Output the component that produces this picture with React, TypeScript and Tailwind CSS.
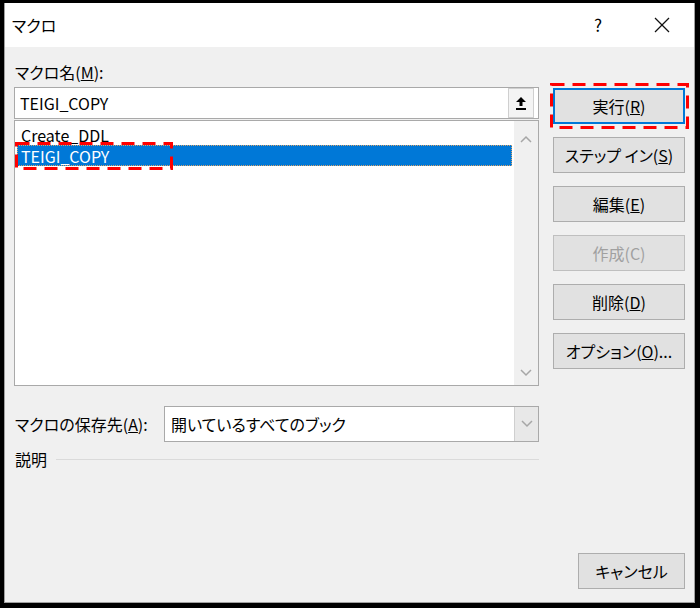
const FONT = "font-['Noto_Sans_CJK_JP',sans-serif] [font-feature-settings:'palt']";

function Btn({ children, primary, disabled }: { children: React.ReactNode; primary?: boolean; disabled?: boolean }) {
  return (
    <div
      className={
        "h-[36px] flex items-center justify-center bg-[#e1e1e1] text-[16px] leading-none " +
        (primary
          ? "border-2 border-[#0078d7] text-black"
          : disabled
          ? "border border-[#bfbfbf] text-[#a0a0a0]"
          : "border border-[#adadad] text-black")
      }
    >
      {children}
    </div>
  );
}

function Chevron({ up }: { up?: boolean }) {
  return (
    <svg width="12" height="8" viewBox="0 0 12 8" fill="none" stroke="#a6a6a6" strokeWidth="1.5">
      {up ? <polyline points="1,7 6,2 11,7" /> : <polyline points="1,1 6,6 11,1" />}
    </svg>
  );
}

export default function App() {
  return (
    <div className={"relative w-[700px] h-[608px] bg-black pt-[3px] pl-[4px] pr-[5px] pb-[5px] text-black " + FONT}>
      <div className="h-full flex flex-col border-x border-b border-[#a0a0a0]">
        {/* title bar */}
        <div className="h-[44px] shrink-0 bg-white flex items-center pl-[7px] pr-[9px] text-[16px]">
          <span>マクロ</span>
          <span className="ml-auto w-[46px] text-center text-[17px]">?</span>
          <span className="ml-[18px] w-[46px] flex items-center justify-center">
            <svg width="16" height="16" viewBox="0 0 16 16" stroke="#111" strokeWidth="1.2">
              <line x1="1" y1="1" x2="15" y2="15" />
              <line x1="15" y1="1" x2="1" y2="15" />
            </svg>
          </span>
        </div>

        {/* body */}
        <div className="flex-1 bg-[#f0f0f0] flex pl-[9px] pr-[9px]">
          {/* left column */}
          <div className="w-[525px] flex flex-col pt-[14px]">
            <div className="h-[22px] leading-[22px] text-[16px] pl-[1px]">
              マクロ名(<span className="underline">M</span>):
            </div>
            <div className="mt-[4px] h-[32px] border border-[#a9a9a9] bg-white flex items-center pr-[4px]">
              <span className="pl-[5px] text-[16px] leading-none">TEIGI_COPY</span>
              <div className="ml-auto w-[26px] h-[30px] border border-[#cfcfcf] bg-[#f4f4f4] flex items-center justify-center">
                <svg width="12" height="14" viewBox="0 0 12 14" fill="#000">
                  <polygon points="6,1 11,6 7.5,6 7.5,10 4.5,10 4.5,6 1,6" />
                  <rect x="1" y="12" width="10" height="2" />
                </svg>
              </div>
            </div>
            <div className="mt-[1px] h-[266px] border border-[#a9a9a9] bg-white flex">
              <div className="flex-1 pt-[3px] pl-[2px] pr-[2px] text-[16px] leading-none">
                <div className="h-[21px] flex items-center pl-[4px]">Create_DDL</div>
                <div className="h-[21px] flex items-center pl-[3px] bg-[#0078d7] text-white border border-dotted border-[#d9a36a]">
                  TEIGI_COPY
                </div>
              </div>
              <div className="w-[24px] bg-[#f0f0f0] flex flex-col items-center justify-between pt-[14px] pb-[8px]">
                <Chevron up />
                <Chevron />
              </div>
            </div>

            <div className="mt-[20px] flex items-center">
              <div className="w-[150px] text-[16px] leading-none pl-[1px]">
                マクロの保存先(<span className="underline">A</span>):
              </div>
              <div className="flex-1 h-[36px] border border-[#a9a9a9] bg-white flex items-stretch">
                <span className="self-center pl-[6px] text-[16px] leading-none">開いているすべてのブック</span>
                <div className="ml-auto w-[24px] bg-[#e8e8e8] border-l border-[#cfcfcf] flex items-center justify-center">
                  <Chevron />
                </div>
              </div>
            </div>

            <div className="mt-[6px] flex items-center">
              <span className="text-[16px] leading-[22px] pl-[1px]">説明</span>
              <div className="flex-1 ml-[9px] h-px bg-[#dadada]" />
            </div>
          </div>

          {/* right column */}
          <div className="ml-[14px] w-[132px] flex flex-col pt-[41px] pb-[13px] gap-[13px]">
            <Btn primary>
              実行(<span className="underline">R</span>)
            </Btn>
            <Btn>
              ステップ イン(<span className="underline">S</span>)
            </Btn>
            <Btn>
              編集(<span className="underline">E</span>)
            </Btn>
            <Btn disabled>作成(C)</Btn>
            <Btn>
              削除(<span className="underline">D</span>)
            </Btn>
            <Btn>
              オプション(<span className="underline">O</span>)...
            </Btn>
            <div className="mt-auto self-end w-[107px]">
              <Btn>キャンセル</Btn>
            </div>
          </div>
        </div>
      </div>

      {/* red dashed annotations */}
      <svg className="absolute left-0 top-0 pointer-events-none" width="700" height="608">
        <rect x="551.5" y="84.5" width="136" height="43" fill="none" stroke="#f00" strokeWidth="3" strokeDasharray="13 8" />
        <rect x="16.5" y="143.5" width="155" height="25" fill="none" stroke="#f00" strokeWidth="3" strokeDasharray="13 8" />
      </svg>
    </div>
  );
}
